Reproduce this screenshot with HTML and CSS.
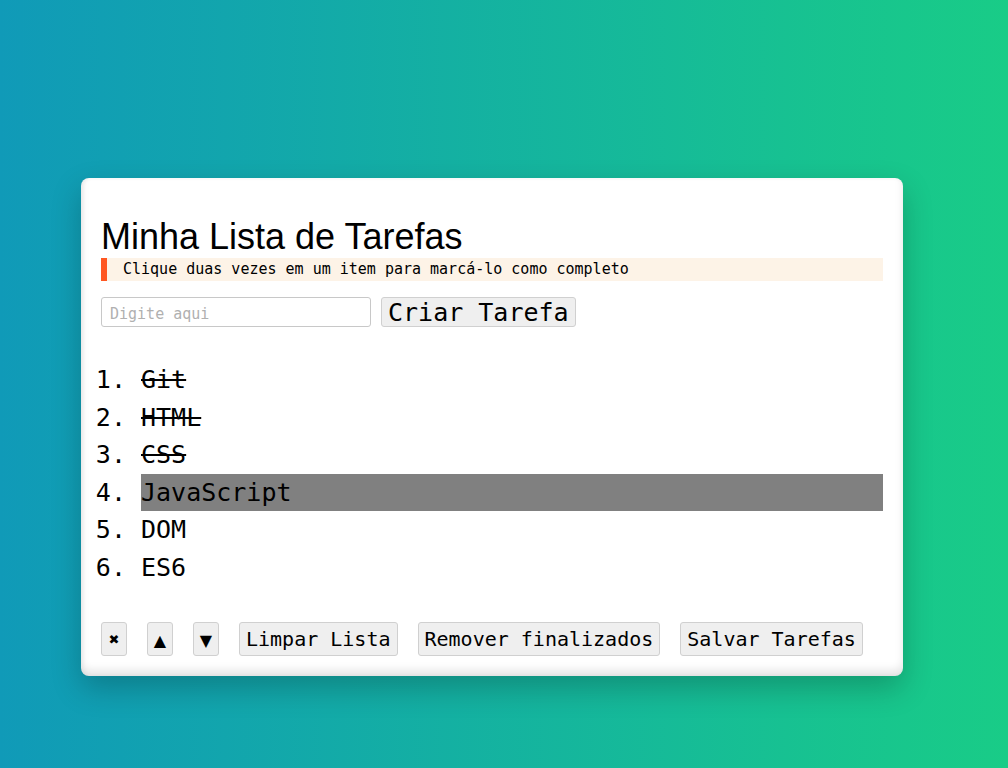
FILE: index.html
```html
<!DOCTYPE html>
<html lang="pt-BR">
<head>
<meta charset="utf-8">
<title>Minha Lista de Tarefas</title>
<link rel="stylesheet" href="styles.css">
</head>
<body>
<main class="card">
  <h1 class="title">Minha Lista de Tarefas</h1>
  <p class="hint">Clique duas vezes em um item para marcá-lo como completo</p>
  <div class="create">
    <input class="task-input" type="text" placeholder="Digite aqui">
    <button class="btn btn-create">Criar Tarefa</button>
  </div>
  <ol class="tasks">
    <li class="task done">Git</li>
    <li class="task done">HTML</li>
    <li class="task done">CSS</li>
    <li class="task selected">JavaScript</li>
    <li class="task">DOM</li>
    <li class="task">ES6</li>
  </ol>
  <div class="actions">
    <button class="btn btn-icon btn-x">✖</button>
    <button class="btn btn-icon">▲</button>
    <button class="btn btn-icon">▼</button>
    <button class="btn">Limpar Lista</button>
    <button class="btn">Remover finalizados</button>
    <button class="btn">Salvar Tarefas</button>
  </div>
</main>
</body>
</html>
```
FILE: styles.css
```css
html, body {
  margin: 0;
  padding: 0;
}
body {
  min-height: 100vh;
  background: linear-gradient(to right, #109ab8, #19cc87);
  padding: 178px 0 0 81px;
  box-sizing: border-box;
  font-family: "DejaVu Sans Mono", monospace;
}
.card {
  width: 822px;
  box-sizing: border-box;
  background: #fff;
  border-radius: 8px;
  padding: 38px 20px 20px;
  box-shadow: 0 12px 30px rgba(0, 0, 0, 0.22), inset 0 -6px 8px rgba(0, 0, 0, 0.1), inset 2px 0 4px rgba(0, 0, 0, 0.05);
}
.title {
  margin: 0;
  font-family: "Liberation Sans", Arial, sans-serif;
  font-weight: normal;
  font-size: 36px;
  line-height: 42px;
  color: #000;
}
.hint {
  margin: 0;
  background: #fdf3e7;
  border-left: 6px solid #ff5722;
  padding: 3px 16px;
  font-size: 15px;
  line-height: 17px;
  color: #000;
}
.create {
  display: flex;
  gap: 10px;
  margin-top: 16px;
}
.task-input {
  width: 270px;
  height: 30px;
  box-sizing: border-box;
  border: 1px solid #c8c8c8;
  border-radius: 3px;
  padding: 4px 8px 0;
  font-family: "DejaVu Sans Mono", monospace;
  font-size: 15px;
}
.task-input::placeholder {
  color: #b0b0b0;
}
.btn {
  font-family: "DejaVu Sans Mono", monospace;
  font-size: 20px;
  height: 34px;
  padding: 0 6px;
  background: #efefef;
  border: 1px solid #d0d0d0;
  border-radius: 3px;
  color: #000;
  line-height: 1;
}
.btn-create {
  font-size: 25px;
  height: 30px;
}
.tasks {
  margin: 34px 0 0;
  padding-left: 40px;
  font-size: 25px;
  line-height: 37.5px;
  list-style: decimal;
}
.task.done {
  text-decoration: line-through;
}
.task.selected {
  background: #808080;
}
.actions {
  display: flex;
  gap: 20px;
  margin-top: 36px;
}
.btn-icon {
  width: 26px;
  padding: 3px 0 0;
  font-family: "DejaVu Sans", sans-serif;
  font-size: 16px;
}
.btn-x {
  font-size: 13px;
  padding-top: 1px;
}
```
